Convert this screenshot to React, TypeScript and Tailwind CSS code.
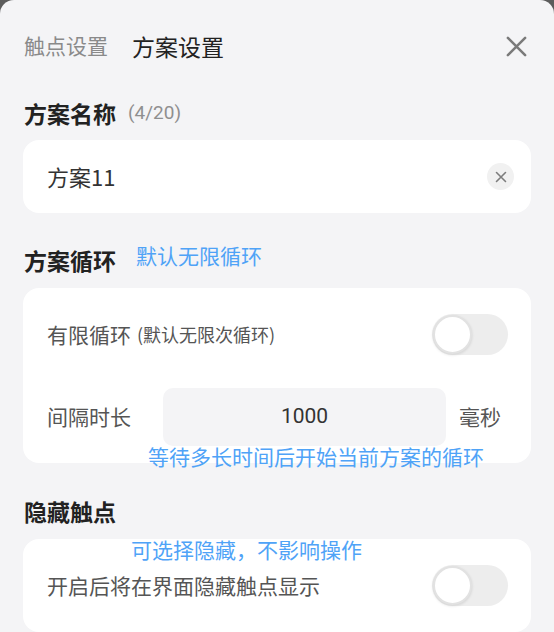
import React from 'react'

const font = { fontFamily: '"Noto Sans CJK SC", "Noto Sans", sans-serif' }

function Toggle() {
  return (
    <div className="w-[76px] h-[41px] rounded-full bg-[#ededed] flex items-center px-[1px] shrink-0">
      <div className="w-[39px] h-[39px] rounded-full bg-white border-[2px] border-[#e2e2e2] shadow-[0_1px_3px_rgba(0,0,0,0.12)]" />
    </div>
  )
}

function CloseIcon({ size, stroke, color }: { size: number; stroke: number; color: string }) {
  return (
    <svg width={size} height={size} viewBox="0 0 24 24" fill="none" stroke={color} strokeWidth={stroke} strokeLinecap="round">
      <path d="M3 3L21 21M21 3L3 21" />
    </svg>
  )
}

export default function App() {
  return (
    <div className="w-[554px] h-[632px] overflow-hidden bg-[#5c5c5c]" style={font}>
      <div className="h-full rounded-t-[14px] bg-[#f4f4f6] px-[23px] flex flex-col">
        {/* tabs */}
        <div className="h-[92px] flex items-center shrink-0">
          <span className="text-[21px] text-[#8a8a8a] ml-[1px]">触点设置</span>
          <span className="text-[23px] text-[#222] ml-[24px]">方案设置</span>
          <button className="ml-auto mr-[3px]">
            <CloseIcon size={23} stroke={2.6} color="#7a7a7a" />
          </button>
        </div>

        {/* 方案名称 */}
        <div className="h-[42px] flex items-center shrink-0 ml-[1px]">
          <span className="text-[23px] font-bold text-[#222]">方案名称</span>
          <span className="text-[19px] text-[#8f8f8f] ml-[12px]" style={{ fontFamily: 'Roboto, "Noto Sans CJK SC", sans-serif' }}>(4/20)</span>
        </div>
        <div className="mt-[6px] h-[73px] rounded-[16px] bg-white flex items-center pl-[24px] pr-[17px] shrink-0">
          <span className="text-[22px] text-[#333]">方案11</span>
          <div className="ml-auto w-[27px] h-[27px] rounded-full bg-[#f1f1f1] flex items-center justify-center">
            <CloseIcon size={12} stroke={3.2} color="#7d7d7d" />
          </div>
        </div>

        {/* 方案循环 */}
        <div className="mt-[26px] h-[42px] flex items-center shrink-0 ml-[1px]">
          <span className="text-[23px] font-bold text-[#222]">方案循环</span>
          <span className="text-[21px] text-[#4fa3f7] ml-[20px] mb-[8px]">默认无限循环</span>
        </div>
        <div className="relative mt-[7px] rounded-[16px] bg-white pt-[26px] pb-[17px] pl-[24px] pr-[23px] flex flex-col gap-[33px] shrink-0">
          <div className="flex items-center">
            <span className="text-[21px] text-[#555]">有限循环</span>
            <span className="text-[18px] text-[#555] ml-[6px]">(默认无限次循环)</span>
            <div className="ml-auto">
              <Toggle />
            </div>
          </div>
          <div className="flex items-center">
            <span className="text-[21px] text-[#555] w-[84px]">间隔时长</span>
            <div className="ml-[32px] w-[283px] h-[58px] rounded-[10px] bg-[#f4f4f6] flex items-center justify-center">
              <span className="text-[21px] text-[#333]" style={{ fontFamily: 'Roboto, sans-serif' }}>1000</span>
            </div>
            <span className="text-[21px] text-[#555] ml-[13px]">毫秒</span>
          </div>
          <span className="absolute left-[125px] top-[155px] text-[21px] leading-[26px] text-[#4fa3f7]">等待多长时间后开始当前方案的循环</span>
        </div>

        {/* 隐藏触点 */}
        <div className="mt-[27px] h-[42px] flex items-center shrink-0 ml-[1px]">
          <span className="text-[23px] font-bold text-[#222]">隐藏触点</span>
        </div>
        <div className="relative mt-[7px] rounded-[16px] bg-white pt-[26px] pb-[26px] pl-[24px] pr-[23px] shrink-0">
          <div className="flex items-center">
            <span className="text-[21px] text-[#555]">开启后将在界面隐藏触点显示</span>
            <div className="ml-auto">
              <Toggle />
            </div>
          </div>
          <span className="absolute left-[108px] top-[-3px] text-[21px] leading-[26px] text-[#4fa3f7]">可选择隐藏，不影响操作</span>
        </div>
      </div>
    </div>
  )
}
